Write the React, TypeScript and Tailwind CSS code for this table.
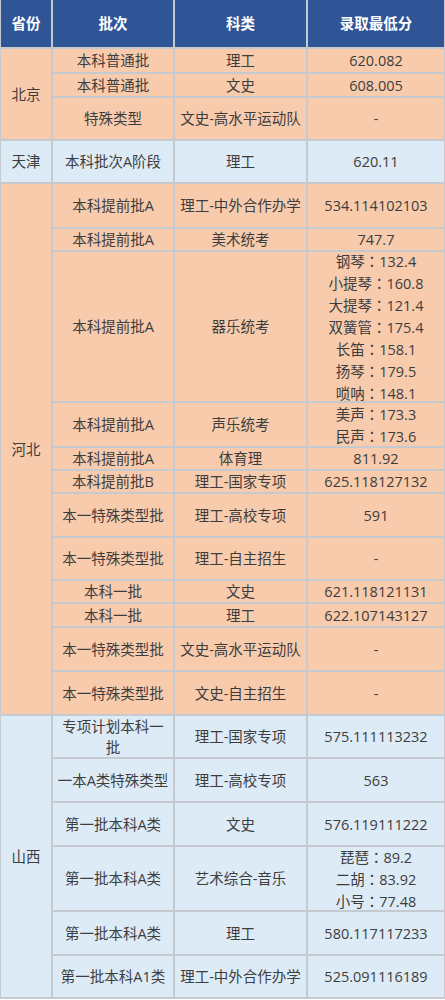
const font = { fontFamily: '"Open Sans", "Noto Sans CJK SC", sans-serif' };

type Row = { batch: React.ReactNode; subject: string; score: string[] };

const beijing: Row[] = [
  { batch: "本科普通批", subject: "理工", score: ["620.082"] },
  { batch: "本科普通批", subject: "文史", score: ["608.005"] },
  { batch: "特殊类型", subject: "文史-高水平运动队", score: ["-"] },
];

const tianjin: Row[] = [{ batch: "本科批次A阶段", subject: "理工", score: ["620.11"] }];

const hebei: Row[] = [
  { batch: "本科提前批A", subject: "理工-中外合作办学", score: ["534.114102103"] },
  { batch: "本科提前批A", subject: "美术统考", score: ["747.7"] },
  {
    batch: "本科提前批A",
    subject: "器乐统考",
    score: ["钢琴：132.4", "小提琴：160.8", "大提琴：121.4", "双簧管：175.4", "长笛：158.1", "扬琴：179.5", "唢呐：148.1"],
  },
  { batch: "本科提前批A", subject: "声乐统考", score: ["美声：173.3", "民声：173.6"] },
  { batch: "本科提前批A", subject: "体育理", score: ["811.92"] },
  { batch: "本科提前批B", subject: "理工-国家专项", score: ["625.118127132"] },
  { batch: "本一特殊类型批", subject: "理工-高校专项", score: ["591"] },
  { batch: "本一特殊类型批", subject: "理工-自主招生", score: ["-"] },
  { batch: "本科一批", subject: "文史", score: ["621.118121131"] },
  { batch: "本科一批", subject: "理工", score: ["622.107143127"] },
  { batch: "本一特殊类型批", subject: "文史-高水平运动队", score: ["-"] },
  { batch: "本一特殊类型批", subject: "文史-自主招生", score: ["-"] },
];

const shanxi: Row[] = [
  {
    batch: (
      <>
        专项计划本科一
        <br />批
      </>
    ),
    subject: "理工-国家专项",
    score: ["575.111113232"],
  },
  { batch: "一本A类特殊类型", subject: "理工-高校专项", score: ["563"] },
  { batch: "第一批本科A类", subject: "文史", score: ["576.119111222"] },
  { batch: "第一批本科A类", subject: "艺术综合-音乐", score: ["琵琶：89.2", "二胡：83.92", "小号：77.48"] },
  { batch: "第一批本科A类", subject: "理工", score: ["580.117117233"] },
  { batch: "第一批本科A1类", subject: "理工-中外合作办学", score: ["525.091116189"] },
];

function Cell({ className, children }: { className: string; children: React.ReactNode }) {
  return <div className={`flex flex-col items-center justify-center text-center leading-[21px] ${className}`}>{children}</div>;
}

// full-width colon drawn centred, as in the original sheet
function Score({ text }: { text: string }) {
  const [name, value] = text.split("：");
  if (value === undefined) return <span>{text}</span>;
  return (
    <span>
      {name}
      <span style={{ fontFamily: '"Noto Sans CJK JP", sans-serif' }}>：</span>
      {value}
    </span>
  );
}

function Province({ name, span, rows, tone }: { name: string; span: string; rows: Row[]; tone: string }) {
  return (
    <>
      <Cell className={`${span} ${tone}`}>{name}</Cell>
      {rows.map((r, i) => (
        <div key={i} className="contents">
          <Cell className={tone}>{r.batch}</Cell>
          <Cell className={tone}>{r.subject}</Cell>
          <Cell className={tone}>
            {r.score.map((s) => (
              <Score key={s} text={s} />
            ))}
          </Cell>
        </div>
      ))}
    </>
  );
}

export default function App() {
  const peach = "bg-[#f8cbad]";
  const blue = "bg-[#ddebf7]";
  return (
    <main className="w-[445px] bg-white" style={font}>
      <div className="grid grid-cols-[50px_120px_131px_136px] grid-rows-[47px_23px_22px_41px_41px_43px_21px_149px_43px_21px_21px_42px_41px_21px_22px_42px_42px_41px_42px_42px_63px_42px_41px] gap-[2px] bg-[#c5cad0] px-[1px] pb-[2px] text-[14.5px] text-[#3d3d3d]">
        {["省份", "批次", "科类", "录取最低分"].map((h) => (
          <div key={h} className="flex items-center justify-center bg-[#2f5597] font-bold text-white">
            {h}
          </div>
        ))}
        <Province name="北京" span="row-span-3" rows={beijing} tone={peach} />
        <Province name="天津" span="row-span-1" rows={tianjin} tone={blue} />
        <Province name="河北" span="row-span-12" rows={hebei} tone={peach} />
        <Province name="山西" span="row-span-6" rows={shanxi} tone={blue} />
      </div>
    </main>
  );
}
